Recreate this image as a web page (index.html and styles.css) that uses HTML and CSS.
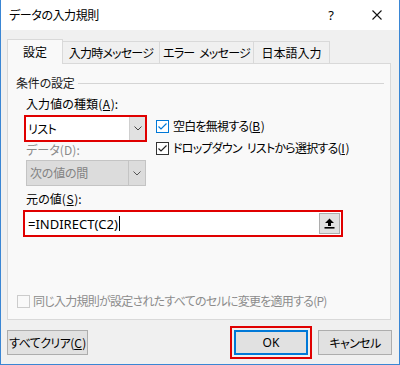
FILE: index.html
```html
<!DOCTYPE html>
<html lang="ja">
<head>
<meta charset="utf-8">
<title>データの入力規則</title>
<link rel="stylesheet" href="styles.css">
</head>
<body>
<div class="window">
  <div class="titlebar">
    <span class="title">データの入力規則</span>
    <span class="help">?</span>
    <svg class="close" width="10" height="10" viewBox="0 0 10 10"><path d="M0.5 0.5 L9.5 9.5 M9.5 0.5 L0.5 9.5" stroke="#111" stroke-width="1.1" fill="none"/></svg>
  </div>
  <div class="body">
    <div class="tabs">
      <div class="tab active t1">設定</div>
      <div class="tab t2">入力時メッセージ</div>
      <div class="tab t3">エラー メッセージ</div>
      <div class="tab t4">日本語入力</div>
    </div>
    <div class="panel">
      <div class="group-head"><span class="group-title">条件の設定</span><span class="rule"></span></div>
      <div class="criteria">
        <div class="leftcol">
          <div class="label">入力値の種類(<u>A</u>):</div>
          <div class="combo marked">
            <span class="combo-text">リスト</span>
            <span class="combo-btn"><svg width="8" height="5" viewBox="0 0 8 5"><path d="M0.5 0.5 L4 4 L7.5 0.5" stroke="#444" stroke-width="1" fill="none"/></svg></span>
          </div>
          <div class="label disabled">データ(D):</div>
          <div class="combo off">
            <span class="combo-text">次の値の間</span>
            <span class="combo-btn"><svg width="8" height="5" viewBox="0 0 8 5"><path d="M0.5 0.5 L4 4 L7.5 0.5" stroke="#555" stroke-width="1" fill="none"/></svg></span>
          </div>
        </div>
        <div class="checks">
          <div class="check">
            <svg class="box" width="13" height="13" viewBox="0 0 13 13"><rect x="0.5" y="0.5" width="12" height="12" fill="#fff" stroke="#0078d7"/><path d="M2.5 6.5 L5 9 L10.5 3.5" stroke="#0078d7" stroke-width="1.2" fill="none"/></svg>
            <span>空白を無視する(<u>B</u>)</span>
          </div>
          <div class="check">
            <svg class="box" width="13" height="13" viewBox="0 0 13 13"><rect x="0.5" y="0.5" width="12" height="12" fill="#fff" stroke="#333"/><path d="M2.5 6.5 L5 9 L10.5 3.5" stroke="#222" stroke-width="1.2" fill="none"/></svg>
            <span>ドロップダウン リストから選択する(<u>I</u>)</span>
          </div>
        </div>
      </div>
      <div class="label">元の値(<u>S</u>):</div>
      <div class="source">
        <span class="source-text">=INDIRECT(C2)<span class="caret"></span></span>
        <span class="pick"><svg width="11" height="11" viewBox="0 0 11 11"><path d="M5.5 0.5 L10 5 L7 5 L7 8 L4 8 L4 5 L1 5 Z" fill="#000"/><rect x="0.5" y="9" width="10" height="1.6" fill="#000"/></svg></span>
      </div>
      <div class="apply-all">
        <svg class="box" width="13" height="13" viewBox="0 0 13 13"><rect x="0.5" y="0.5" width="12" height="12" fill="#f9f9f9" stroke="#cccccc"/></svg>
        <span>同じ入力規則が設定されたすべてのセルに変更を適用する(P)</span>
      </div>
    </div>
    <div class="buttons">
      <div class="btn clear">すべてクリア(<u>C</u>)</div>
      <div class="spacer"></div>
      <div class="btn ok">OK</div>
      <div class="btn cancel">キャンセル</div>
    </div>
  </div>
</div>
</body>
</html>
```
FILE: styles.css
```css
* { box-sizing: border-box; }
html, body { margin: 0; padding: 0; }
body {
  font-family: "Noto Sans CJK JP", "Noto Sans", sans-serif;
  font-size: 12px;
  line-height: 16px;
  color: #000;
  font-feature-settings: "palt";
  letter-spacing: -0.6px;
  word-spacing: 3px;
  background: #fff;
}
u {
  text-decoration: underline;
  text-underline-offset: 1px;
  letter-spacing: 0;
  padding: 0 0.5px;
}

.window {
  width: 400px;
  height: 365px;
  border-left: 1px solid #3a86d4;
  border-right: 1px solid #3a86d4;
  border-bottom: 1px solid #3a86d4;
  display: flex;
  flex-direction: column;
}

.titlebar {
  height: 30px;
  background: #fff;
  display: flex;
  align-items: center;
  padding-left: 8px;
}
.title { font-size: 12px; letter-spacing: -0.4px; }
.help {
  margin-left: auto;
  width: 16px;
  text-align: center;
  font-size: 13px;
  letter-spacing: 0;
  font-family: "Noto Sans", sans-serif;
}
.close { margin-left: 33px; margin-right: 17px; }

.body {
  flex: 1;
  background: #f0f0f0;
  padding: 9px 7px 0 6px;
}

.tabs {
  display: flex;
  align-items: flex-end;
  height: 24px;
}
.tab {
  height: 22px;
  border: 1px solid #d9d9d9;
  border-bottom: none;
  background: #f0f0f0;
  display: flex;
  align-items: center;
  justify-content: center;
  margin-left: -1px;
  padding-top: 1px;
  white-space: nowrap;
  letter-spacing: -0.8px;
}
.tab.active {
  height: 25px;
  margin-bottom: -1px;
  margin-left: 0;
  background: #f9f9f9;
  position: relative;
  z-index: 1;
  padding-top: 0;
  letter-spacing: 0;
}
.t1 { width: 56px; }
.t2 { width: 98px; }
.t3 { width: 95px; }
.t4 { width: 77px; letter-spacing: 0; }

.panel {
  width: 384px;
  height: 257px;
  border: 1px solid #d9d9d9;
  background: #f9f9f9;
  padding: 11px 6px 0 8px;
}

.group-head {
  display: flex;
  align-items: center;
  height: 16px;
}
.group-title { color: #1a1a1a; letter-spacing: -0.2px; }
.rule {
  flex: 1;
  height: 1px;
  background: #d5d5d5;
  margin-left: 3px;
}

.label {
  margin-left: 8px;
  padding-left: 2px;
  height: 16px;
  letter-spacing: 0.1px;
}
.label.disabled { color: #8a8a8a; }

.criteria {
  display: flex;
  margin-top: 5px;
}
.criteria .label { margin-left: 0; }
.leftcol {
  margin-left: 8px;
  width: 123px;
  display: flex;
  flex-direction: column;
}
.combo {
  display: flex;
  background: #fff;
}
.combo.marked {
  margin-top: 3px;
  height: 27px;
  border: 2px solid #e00000;
}
.combo-text {
  flex: 1;
  padding-left: 2px;
  display: flex;
  align-items: center;
}
.combo-btn {
  width: 16px;
  background: #e1e1e1;
  border-left: 1px solid #cfcfcf;
  display: flex;
  align-items: center;
  justify-content: center;
}
.combo.off {
  margin-top: 2px;
  margin-left: 2px;
  width: 120px;
  height: 26px;
  background: #dcdcdc;
  border: 1px solid #c4c4c4;
  color: #838383;
}
.combo.off .combo-text { padding-left: 3px; letter-spacing: -0.2px; }
.combo.off .combo-btn {
  background: #dcdcdc;
  border-left: 1px solid #c4c4c4;
  width: 17px;
}

.checks {
  margin-left: 9px;
  padding-top: 22px;
  display: flex;
  flex-direction: column;
  gap: 6px;
}
.check {
  display: flex;
  align-items: center;
  height: 16px;
  gap: 4px;
  white-space: nowrap;
  letter-spacing: -0.75px;
}
.box { display: block; flex: none; }

.criteria + .label { margin-top: 5px; }

.source {
  margin-top: 3px;
  margin-left: 7px;
  width: 320px;
  height: 27px;
  border: 2px solid #e00000;
  background: #fff;
  display: flex;
  align-items: center;
  padding: 0 1px 0 3px;
}
.source-text {
  flex: 1;
  font-family: "Noto Sans", sans-serif;
  font-size: 13px;
  letter-spacing: 0;
  display: flex;
  align-items: center;
}
.caret {
  display: inline-block;
  width: 1px;
  height: 15px;
  background: #000;
  margin-left: 1px;
}
.pick {
  width: 21px;
  height: 21px;
  background: #e1e1e1;
  border: 1px solid #adadad;
  display: flex;
  align-items: center;
  justify-content: center;
  margin-top: -1px;
}

.apply-all {
  margin-top: 56px;
  margin-left: 1px;
  display: flex;
  align-items: center;
  height: 16px;
  gap: 3px;
  color: #8c8c8c;
  white-space: nowrap;
  letter-spacing: -0.75px;
}

.buttons {
  margin-top: 10px;
  display: flex;
  align-items: center;
}
.spacer { flex: 1; }
.btn {
  height: 25px;
  background: #e1e1e1;
  border: 1px solid #adadad;
  display: flex;
  align-items: center;
  justify-content: center;
  white-space: nowrap;
}
.clear { width: 81px; letter-spacing: -0.6px; }
.ok {
  width: 74px;
  border: 2px solid #0078d7;
  outline: 2px solid #e00000;
  outline-offset: 2px;
  letter-spacing: 0;
  font-family: "Noto Sans", sans-serif;
}
.cancel { width: 74px; margin-left: 10px; }
```
